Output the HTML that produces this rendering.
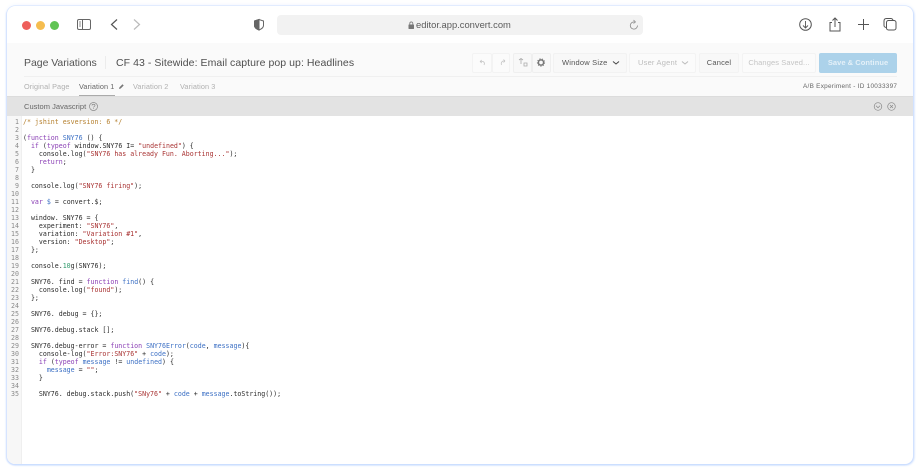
<!DOCTYPE html>
<html><head><meta charset="utf-8">
<style>
html,body{margin:0;padding:0;width:920px;height:473px;overflow:hidden;background:#fff}
body{position:relative;font-family:"Liberation Sans",sans-serif}
#all{position:absolute;left:0;top:0;width:920px;height:473px;filter:blur(.3px)}
.a{position:absolute;white-space:nowrap}
#win{position:absolute;left:7px;top:6px;width:906px;height:458px;background:#fff;border-radius:8px;box-shadow:0 0 0 .5px #cfe0ff,1px 1px 2px #bcd4ff,-1px 1px 1.5px #cfdfff,0 -1px 4px #f1f5ff;overflow:hidden}
#head{position:absolute;left:0;top:37px;width:906px;height:53px;background:#fafafa}
#bar{position:absolute;left:0;top:90px;width:906px;height:20px;background:#e3e3e3;border-top:1px solid #dcdcdc;box-sizing:border-box}
#gut{position:absolute;left:0;top:110px;width:14px;height:348px;background:#f7f7f7;border-right:1px solid #efefef}
.btn{position:absolute;top:53px;height:19.5px;box-sizing:border-box;border:1px solid #f3f3f3;background:#fbfbfb;border-radius:2px;font-size:7.5px;line-height:17.5px;text-align:center;white-space:nowrap}
.n{position:absolute;left:7px;width:12px;text-align:right;font:6.6px/8px "DejaVu Sans Mono",monospace;color:#8a8a8a}
.c{position:absolute;left:23px;font:6.6px/8px "DejaVu Sans Mono",monospace;color:#2b2b2b;white-space:pre}
.k{color:#8a3fb5}.s{color:#a83232}.v{color:#3b6fc4}.m{color:#b5802f}.g{color:#2f9a6b}
</style></head><body><div id="all">
<div id="win"><div id="head"></div><div id="bar"></div><div id="gut"></div></div>

<div class="a" style="left:22px;top:21px;width:9px;height:9px;border-radius:50%;background:#ee5f5b"></div>
<div class="a" style="left:36px;top:21px;width:9px;height:9px;border-radius:50%;background:#f5bd4f"></div>
<div class="a" style="left:50px;top:21px;width:9px;height:9px;border-radius:50%;background:#61c454"></div>

<div class="a" style="left:277px;top:15px;width:366px;height:20px;background:#f2f2f2;border-radius:4px"></div>

<svg class="a" style="left:0;top:0" width="920" height="44" fill="none" stroke="#666" stroke-width="1">
<rect x="77.500" y="19.500" width="13" height="10" rx="1.500"/><path d="M82.500 19.500V29.500"/><path d="M79 22h2M79 24h2M79 26h2" stroke-width=".7"/>
<path d="M117 19.500L111.500 24.500L117 29.500" stroke="#555" stroke-width="1.200"/>
<path d="M134 19.500L139.500 24.500L134 29.500" stroke="#bbb" stroke-width="1.200"/>
<path d="M259 19.500L254.500 21V25.500C254.500 27.500 256.500 29 259 30C261.500 29 263.500 27.500 263.500 25.500V21Z" stroke="#666"/>
<path d="M259 19.500L254.500 21V25.500C254.500 27.500 256.500 29 259 30Z" fill="#666" stroke="#666"/>
<path d="M634.500 22A3.600 3.600 0 1 0 637.500 25.500" stroke="#888" stroke-width=".8"/><path d="M633.500 20L635.500 22L633.500 23.500" stroke="#888" stroke-width=".7"/>
<circle cx="805.500" cy="24.500" r="5.800" stroke="#555"/><path d="M805.500 21V28M803 25.500L805.500 28L808 25.500" stroke="#555" stroke-width=".9"/>
<path d="M832 22.500H830V31H840V22.500H838M835 27V18M832.500 20.500L835 18L837.500 20.500" stroke="#555"/>
<path d="M863.500 19V30M858 24.500H869" stroke="#555"/>
<rect x="886.500" y="20.500" width="9.500" height="9.500" rx="2" stroke="#555"/><path d="M886.500 27.500C885 27.500 884 26.500 884 25.500V21C884 19.500 885 18.500 886.500 18.500H891C892 18.500 893 19.500 893 20.500" stroke="#555"/>
</svg>

<svg class="a" style="left:408px;top:21px" width="7" height="9" fill="none"><rect x=".5" y="3.500" width="5.500" height="4.500" rx=".5" fill="#777"/><path d="M1.800 3.500V2.300C1.800 .5 4.800 .5 4.800 2.300V3.500" stroke="#777" stroke-width=".8"/></svg>
<div class="a" style="left:416px;top:19px;font-size:9.400px;line-height:12px;color:#5c5c5c">editor.app.convert.com</div>

<div class="a" style="left:24px;top:56px;font-size:10.500px;line-height:14px;color:#555;letter-spacing:-.04px">Page Variations</div>
<div class="a" style="left:105px;top:56px;width:1px;height:13px;background:#ececec"></div>
<div class="a" style="left:116px;top:56px;font-size:10.500px;line-height:14px;color:#4f4f4f;letter-spacing:.06px">CF 43 - Sitewide: Email capture pop up: Headlines</div>

<div class="btn" style="left:472px;width:20px"></div>
<div class="btn" style="left:492px;width:18px"></div>
<div class="btn" style="left:513px;width:19px;border-color:#efefef;background:#f8f8f8"></div>
<div class="btn" style="left:532px;width:19px;border-color:#efefef;background:#f8f8f8"></div>
<svg class="a" style="left:472px;top:53px" width="80" height="20" fill="none" stroke="#c4c4c4" stroke-width=".8">
<path d="M8 8.500H11C13 9.500 12.500 11 12 12M8 8.500L9.800 7M8 8.500L9.800 10"/>
<path d="M33 8H31C29 9 29 11 29.500 12M33 8L31.500 6.500M33 8L31.500 9.500"/>
<path d="M47 7L49 5.500L51 7M49 6V11M52 10h3v3h-3z" stroke="#aaa"/>
<circle cx="69" cy="9.500" r="2.600" stroke="#777" stroke-width="1.500"/><circle cx="69" cy="9.500" r="3.700" stroke="#777" stroke-width=".8" stroke-dasharray="1.300 1.300"/>
</svg>
<div class="btn" style="left:553px;width:74px;text-align:left;padding-left:8px;color:#555;letter-spacing:.2px;background:#f8f8f8;border-color:#f2f2f2">Window Size</div>
<svg class="a" style="left:611.500px;top:60px" width="8" height="6" fill="none"><path d="M1 1.500L4 4L7 1.500" stroke="#444" stroke-width="1"/></svg>
<div class="btn" style="left:629px;width:67px;text-align:left;padding-left:8px;color:#bdbdbd;letter-spacing:.2px">User Agent</div>
<svg class="a" style="left:681px;top:60px" width="8" height="6" fill="none"><path d="M1 1.500L4 4L7 1.500" stroke="#bbb" stroke-width="1"/></svg>
<div class="btn" style="left:699px;width:40px;color:#555;letter-spacing:.2px;background:#f8f8f8">Cancel</div>
<div class="btn" style="left:742px;width:74px;color:#c4c4c4;letter-spacing:.1px">Changes Saved...</div>
<div class="btn" style="left:819px;width:78px;background:#acd2ea;border-color:#acd2ea;color:#e4f0f8;font-weight:bold;letter-spacing:.05px">Save &amp; Continue</div>
<div class="a" style="left:24px;top:76px;width:873px;height:1px;background:#f0f0f0"></div>

<div class="a" style="left:24px;top:82px;font-size:7.300px;line-height:10px;color:#b0b0b0;letter-spacing:.1px">Original Page</div>
<div class="a" style="left:79px;top:82px;font-size:7.300px;line-height:10px;color:#666;letter-spacing:.1px">Variation 1</div>
<svg class="a" style="left:118px;top:83px" width="7" height="7"><path d="M1 6L1.500 4.300L4.500 1.300L5.700 2.500L2.700 5.500Z" fill="#777"/></svg>
<div class="a" style="left:133px;top:82px;font-size:7.300px;line-height:10px;color:#b0b0b0;letter-spacing:.1px">Variation 2</div>
<div class="a" style="left:180px;top:82px;font-size:7.300px;line-height:10px;color:#b0b0b0;letter-spacing:.1px">Variation 3</div>
<div class="a" style="left:79px;top:95px;width:36px;height:1px;background:#aaa"></div>
<div class="a" style="left:803px;top:82px;font-size:6.400px;line-height:10px;color:#666;letter-spacing:.27px">A/B Experiment - ID 10033397</div>

<div class="a" style="left:24px;top:101px;font-size:7.500px;line-height:11px;color:#666;letter-spacing:.03px">Custom Javascript</div>
<svg class="a" style="left:88px;top:101px" width="11" height="11" fill="none"><circle cx="5.500" cy="5.500" r="4" stroke="#888" stroke-width=".7"/><path d="M4 4.500C4 2.800 7 2.800 7 4.500C7 5.500 5.500 5.500 5.500 6.500M5.500 7.300V8" stroke="#888" stroke-width=".7"/></svg>
<svg class="a" style="left:872px;top:101px" width="26" height="11" fill="none" stroke="#888" stroke-width=".7"><circle cx="6" cy="5.500" r="3.800"/><path d="M4 4.800L6 6.800L8 4.800"/><circle cx="19.500" cy="5.500" r="3.800"/><path d="M18 4L21 7M21 4L18 7"/></svg>

<div class="n" style="top:117.500px">1<br>2<br>3<br>4<br>5<br>6<br>7<br>8<br>9<br>10<br>11<br>12<br>13<br>14<br>15<br>16<br>17<br>18<br>19<br>20<br>21<br>22<br>23<br>24<br>25<br>26<br>27<br>28<br>29<br>30<br>31<br>32<br>33<br>34<br>35</div>
<div class="c" style="top:117.500px"><span class="m">/* jshint esversion: 6 */</span>

(<span class="k">function</span> <span class="v">SNY76</span> () {
  <span class="k">if</span> (<span class="k">typeof</span> window.SNY76 I= <span class="s">"undefined"</span>) {
    console.log(<span class="s">"SNY76 has already Fun. Aborting..."</span>);
    <span class="k">return</span>;
  }

  console.log(<span class="s">"SNY76 firing"</span>);

  <span class="k">var</span> <span class="v">$</span> = convert.$;

  window. SNY76 = {
    experiment: <span class="s">"SNY76"</span>,
    variation: <span class="s">"Variation #1"</span>,
    version: <span class="s">"Desktop"</span>;
  };

  console.<span class="g">10</span>g(SNY76);

  SNY76. find = <span class="k">function</span> <span class="v">find</span>() {
    console.log(<span class="s">"found"</span>);
  };

  SNY76. debug = {};

  SNY76.debug.stack [];

  SNY76.debug-error = <span class="k">function</span> <span class="v">SNY76Error</span>(<span class="v">code</span>, <span class="v">message</span>){
    console-log(<span class="s">"Error:SNY76"</span> + <span class="v">code</span>);
    <span class="k">if</span> (<span class="k">typeof</span> <span class="v">message</span> != <span class="v">undefined</span>) {
      <span class="v">message</span> = <span class="s">""</span>;
    }

    SNY76. debug.stack.push(<span class="s">"SNy76"</span> + <span class="v">code</span> + <span class="v">message</span>.toString());</div>
</div></body></html>
